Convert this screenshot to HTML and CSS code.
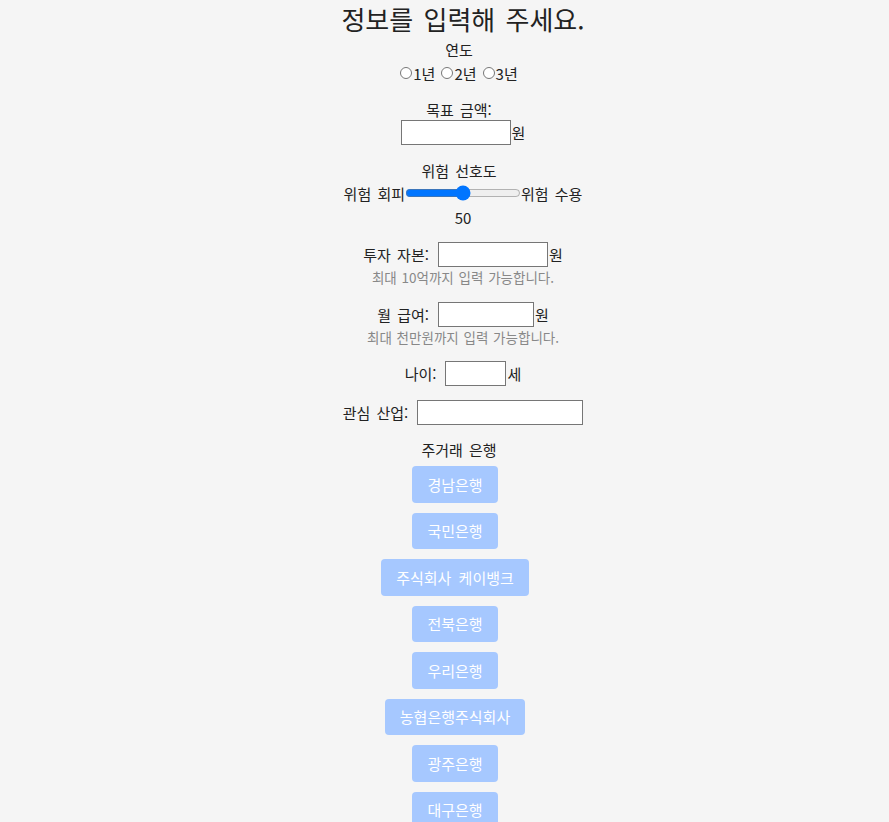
FILE: index.html
```html
<!DOCTYPE html>
<html lang="ko">
<head>
<meta charset="utf-8">
<title>정보 입력</title>
<link rel="stylesheet" href="styles.css">
</head>
<body>
<main class="page">
  <h1 class="title">정보를 입력해 주세요.</h1>

  <div class="text label shift first">연도</div>
  <div class="radios shift">
    <label class="radio"><input type="radio" name="year">1년</label>
    <label class="radio"><input type="radio" name="year">2년</label>
    <label class="radio"><input type="radio" name="year">3년</label>
  </div>

  <div class="text label shift g-goal">목표 금액:</div>
  <div class="row"><input class="field w-goal" type="text"><span class="unit">원</span></div>

  <div class="text label shift g-risk">위험 선호도</div>
  <div class="row slider-row">
    <span>위험 회피</span><input class="range" type="range" min="0" max="100" value="50"><span>위험 수용</span>
  </div>
  <div class="text value">50</div>

  <div class="row g-capital"><span class="lbl">투자 자본:</span><input class="field w-capital" type="text"><span class="unit">원</span></div>
  <div class="text hint">최대 10억까지 입력 가능합니다.</div>

  <div class="row g-salary"><span class="lbl">월 급여:</span><input class="field w-salary" type="text"><span class="unit">원</span></div>
  <div class="text hint">최대 천만원까지 입력 가능합니다.</div>

  <div class="row g-age"><span class="lbl">나이:</span><input class="field w-age" type="text"><span class="unit">세</span></div>

  <div class="row g-industry"><span class="lbl">관심 산업:</span><input class="field w-industry" type="text"></div>

  <div class="text label shift g-bank">주거래 은행</div>
  <div class="banks">
    <button class="bank" type="button">경남은행</button>
    <button class="bank" type="button">국민은행</button>
    <button class="bank" type="button">주식회사 케이뱅크</button>
    <button class="bank" type="button">전북은행</button>
    <button class="bank" type="button">우리은행</button>
    <button class="bank" type="button">농협은행주식회사</button>
    <button class="bank" type="button">광주은행</button>
    <button class="bank" type="button">대구은행</button>
  </div>
</main>
</body>
</html>
```

FILE: styles.css
```css
html, body {
  margin: 0;
  padding: 0;
  background: #f5f5f5;
}

body {
  font-family: "Noto Sans CJK KR", "Noto Sans", sans-serif;
  font-size: 15px;
  color: #222;
  word-spacing: 2px;
}

.page {
  margin-left: 37px;
  display: flex;
  flex-direction: column;
  align-items: center;
}

.title {
  margin: 0;
  height: 34px;
  font-size: 26px;
  line-height: 38px;
  font-weight: 400;
  color: #222;
  word-spacing: 3px;
}

.text {
  line-height: 20px;
  height: 20px;
}

.shift {
  padding-right: 8px;
}

.first {
  margin-top: 6px;
}

.radios {
  margin-top: 3px;
  height: 20px;
  display: flex;
  align-items: center;
  word-spacing: 0;
}

.radio {
  display: flex;
  align-items: center;
  margin-right: 6px;
}

.radio:last-child {
  margin-right: 0;
}

.radio input {
  width: 12px;
  height: 12px;
  margin: 0 1px 0 0;
}

.g-goal { margin-top: 17px; }

.row {
  display: flex;
  align-items: center;
  height: 25px;
}

.field {
  box-sizing: border-box;
  height: 25px;
  border: 1px solid #767676;
  background: #fff;
  padding: 1px 3px;
  margin: 0;
  font: inherit;
}

.w-goal { width: 110px; }
.w-capital { width: 110px; }
.w-salary { width: 96px; }
.w-age { width: 61px; }
.w-industry { width: 166px; }

.unit {
  margin-left: 1px;
}

.lbl {
  margin-right: 9px;
}

.g-risk { margin-top: 16px; }

.slider-row {
  margin-top: 2px;
  height: 20px;
}

.range {
  width: 116px;
  margin: 0;
}

.value { margin-top: 5px; }

.g-capital { margin-top: 14px; }
.g-salary { margin-top: 15px; }
.g-age { margin-top: 14px; }
.g-industry { margin-top: 14px; }

.hint {
  color: #888;
  font-size: 13.5px;
  word-spacing: 1px;
}

.g-bank { margin-top: 15px; }

.banks {
  margin-top: 6px;
  display: flex;
  flex-direction: column;
  align-items: center;
  gap: 10px;
  padding-right: 16px;
}

.bank {
  box-sizing: border-box;
  height: 36.5px;
  padding: 0 15px;
  border: none;
  border-radius: 4px;
  background: #a6c8ff;
  color: #fff;
  font: inherit;
  word-spacing: 3px;
}
```
